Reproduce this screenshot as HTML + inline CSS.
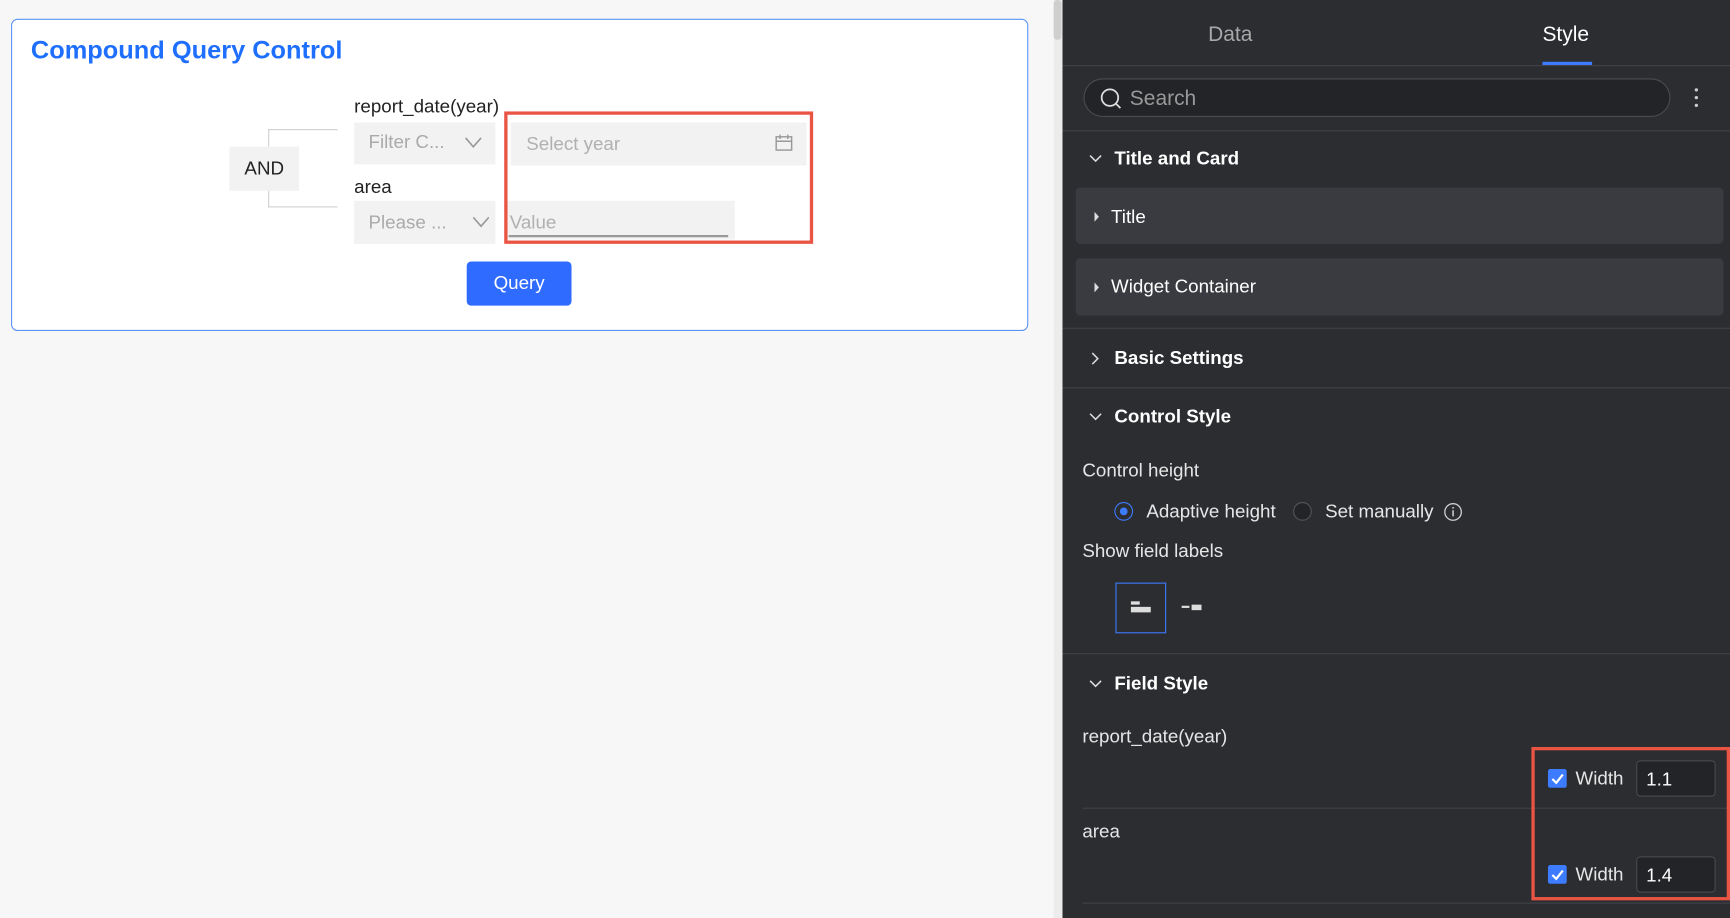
<!DOCTYPE html>
<html><head><meta charset="utf-8"><style>
*{box-sizing:border-box;margin:0;padding:0}
html,body{width:1730px;height:918px;overflow:hidden;background:#f7f7f7;font-family:"Liberation Sans",sans-serif}
#w{position:absolute;left:0;top:0;width:1568px;height:832px;transform:scale(1.10332,1.10337);transform-origin:0 0}
.a{position:absolute}
.t{position:absolute;white-space:nowrap}
.rp{color:#e6e6e6;font-size:17px}
.hd{color:#fff;font-weight:bold;font-size:17px}
.ln{position:absolute;height:1px;background:#414247}
</style></head><body><div id="w">
<div class="a" style="left:0;top:0;width:955px;height:832px;background:#f7f7f7"></div>
<div class="a" style="left:955px;top:0;width:8px;height:832px;background:#ececec"></div>
<div class="a" style="left:955px;top:0;width:7px;height:36px;background:#cfcfcf;border-radius:3px"></div>
<!-- card -->
<div class="a" style="left:10px;top:17px;width:922px;height:283px;background:#fff;border:1.5px solid #5b93f5;border-radius:6px"></div>
<div class="t" style="left:28px;top:32px;font-size:23px;font-weight:bold;color:#1f6fff">Compound Query Control</div>
<div class="a" style="left:243px;top:117px;width:63px;height:71px;border:1.5px solid #d0d0d0;border-right:none"></div>
<div class="a" style="left:208px;top:133px;width:63px;height:40px;background:#f2f2f2;font-size:17px;color:#222;text-align:center;line-height:40px">AND</div>
<div class="t" style="left:321px;top:87px;font-size:17px;color:#222">report_date(year)</div>
<div class="a" style="left:321px;top:111px;width:128px;height:38px;background:#f2f2f2"></div>
<div class="t" style="left:334px;top:119px;font-size:17px;color:#aaa">Filter C...</div>
<svg class="a" style="left:421px;top:123px" width="16" height="12"><path d="M1 2l7 8 7-8" fill="none" stroke="#999" stroke-width="1.5"/></svg>
<div class="a" style="left:463px;top:111px;width:268px;height:39px;background:#f2f2f2"></div>
<div class="t" style="left:477px;top:121px;font-size:17px;color:#b0b0b0">Select year</div>
<svg class="a" style="left:702px;top:121px" width="18" height="17"><rect x="1.5" y="3" width="14" height="12" fill="none" stroke="#999" stroke-width="1.3"/><path d="M1.5 7h14M5 1v4M12 1v4" stroke="#999" stroke-width="1.3"/></svg>
<div class="t" style="left:321px;top:160px;font-size:17px;color:#222">area</div>
<div class="a" style="left:321px;top:182px;width:128px;height:39px;background:#f2f2f2"></div>
<div class="t" style="left:334px;top:192px;font-size:17px;color:#aaa">Please ...</div>
<svg class="a" style="left:428px;top:195px" width="16" height="12"><path d="M1 2l7 8 7-8" fill="none" stroke="#999" stroke-width="1.5"/></svg>
<div class="a" style="left:459px;top:182px;width:207px;height:35px;background:#f2f2f2"></div>
<div class="a" style="left:461px;top:213px;width:199px;height:2px;background:#999"></div>
<div class="t" style="left:462px;top:192px;font-size:17px;color:#b0b0b0">Value</div>
<div class="a" style="left:457px;top:101px;width:280px;height:120px;border:3px solid #ea5443"></div>
<div class="a" style="left:423px;top:237px;width:95px;height:40px;background:#2f6bff;border-radius:4px;color:#fff;font-size:17px;text-align:center;line-height:40px">Query</div>
<!-- right panel -->
<div class="a" style="left:963px;top:0;width:605px;height:832px;background:#2c2d31"></div>
<div class="t" style="left:1095px;top:21px;font-size:19px;color:#a8a8a8">Data</div>
<div class="t" style="left:1398px;top:21px;font-size:19px;color:#fff">Style</div>
<div class="a" style="left:1398px;top:56px;width:45px;height:3px;background:#3d7bff"></div>
<div class="ln" style="left:963px;top:59px;width:605px"></div>
<div class="a" style="left:982px;top:71px;width:532px;height:35px;border:1px solid #4a4b50;border-radius:18px;background:#232428"></div>
<svg class="a" style="left:996px;top:79px" width="22" height="22"><circle cx="10" cy="9.5" r="7.5" fill="none" stroke="#ddd" stroke-width="1.6"/><path d="M15.5 15l4 4" stroke="#ddd" stroke-width="1.6"/></svg>
<div class="t" style="left:1024px;top:79px;font-size:19px;color:#999">Search</div>
<div class="a" style="left:1536px;top:80px;width:3px;height:3px;background:#ccc;border-radius:2px;box-shadow:0 7px #ccc,0 14px #ccc"></div>
<div class="ln" style="left:963px;top:118px;width:605px"></div>
<svg class="a" style="left:987px;top:139px" width="12" height="10"><path d="M1 2l5 5 5-5" fill="none" stroke="#ddd" stroke-width="1.4"/></svg>
<div class="t hd" style="left:1010px;top:134px">Title and Card</div>
<div class="a" style="left:975px;top:170px;width:587px;height:51px;background:#3a3b40;border-radius:4px"></div>
<svg class="a" style="left:991px;top:192px" width="6" height="9"><path d="M1 0l4 4.5L1 9z" fill="#ddd"/></svg>
<div class="t rp" style="left:1007px;top:187px;color:#fff">Title</div>
<div class="a" style="left:975px;top:234px;width:587px;height:52px;background:#3a3b40;border-radius:4px"></div>
<svg class="a" style="left:991px;top:256px" width="6" height="9"><path d="M1 0l4 4.5L1 9z" fill="#ddd"/></svg>
<div class="t rp" style="left:1007px;top:250px;color:#fff">Widget Container</div>
<div class="ln" style="left:963px;top:297px;width:605px"></div>
<svg class="a" style="left:988px;top:319px" width="10" height="12"><path d="M2 1l5 5-5 5" fill="none" stroke="#ddd" stroke-width="1.4"/></svg>
<div class="t hd" style="left:1010px;top:315px">Basic Settings</div>
<div class="ln" style="left:963px;top:351px;width:605px"></div>
<svg class="a" style="left:987px;top:373px" width="12" height="10"><path d="M1 2l5 5 5-5" fill="none" stroke="#ddd" stroke-width="1.4"/></svg>
<div class="t hd" style="left:1010px;top:368px">Control Style</div>
<div class="t rp" style="left:981px;top:417px">Control height</div>
<div class="a" style="left:1010px;top:455px;width:17px;height:17px;border:1.5px solid #3d7bff;border-radius:50%"></div>
<div class="a" style="left:1015px;top:460px;width:7px;height:7px;background:#3d7bff;border-radius:50%"></div>
<div class="t rp" style="left:1039px;top:454px">Adaptive height</div>
<div class="a" style="left:1172px;top:455px;width:17px;height:17px;border:1px solid #555;border-radius:50%;background:#232428"></div>
<div class="t rp" style="left:1201px;top:454px">Set manually</div>
<svg class="a" style="left:1308px;top:455px" width="18" height="18"><circle cx="9" cy="9" r="7.5" fill="none" stroke="#ccc" stroke-width="1.2"/><path d="M9 7.5v5.5M9 4.5v1.5" stroke="#ccc" stroke-width="1.4"/></svg>
<div class="t rp" style="left:981px;top:490px">Show field labels</div>
<div class="a" style="left:1011px;top:528px;width:46px;height:46px;border:1px solid #3d7bff"></div>
<div class="a" style="left:1025px;top:545px;width:8px;height:3px;background:#ddd"></div>
<div class="a" style="left:1025px;top:550px;width:18px;height:5px;background:#ddd"></div>
<div class="a" style="left:1071px;top:549px;width:7px;height:2px;background:#ddd"></div>
<div class="a" style="left:1080px;top:548px;width:9px;height:5px;background:#ddd"></div>
<div class="ln" style="left:963px;top:592px;width:605px"></div>
<svg class="a" style="left:987px;top:615px" width="12" height="10"><path d="M1 2l5 5 5-5" fill="none" stroke="#ddd" stroke-width="1.4"/></svg>
<div class="t hd" style="left:1010px;top:610px">Field Style</div>
<div class="t rp" style="left:981px;top:658px">report_date(year)</div>
<div class="a" style="left:1403px;top:697px;width:17px;height:17px;background:#3d7bff;border-radius:2px"></div>
<svg class="a" style="left:1403px;top:697px" width="17" height="17"><path d="M4 9l3.5 3.5L13.5 5" fill="none" stroke="#fff" stroke-width="2"/></svg>
<div class="t rp" style="left:1428px;top:696px">Width</div>
<div class="a" style="left:1483px;top:689px;width:72px;height:33px;border:1px solid #48494e;border-radius:4px;background:#232428"></div>
<div class="t rp" style="left:1492px;top:697px;color:#fff">1.1</div>
<div class="ln" style="left:981px;top:732px;width:587px"></div>
<div class="t rp" style="left:981px;top:744px">area</div>
<div class="a" style="left:1403px;top:784px;width:17px;height:17px;background:#3d7bff;border-radius:2px"></div>
<svg class="a" style="left:1403px;top:784px" width="17" height="17"><path d="M4 9l3.5 3.5L13.5 5" fill="none" stroke="#fff" stroke-width="2"/></svg>
<div class="t rp" style="left:1428px;top:783px">Width</div>
<div class="a" style="left:1483px;top:776px;width:72px;height:33px;border:1px solid #48494e;border-radius:4px;background:#232428"></div>
<div class="t rp" style="left:1492px;top:784px;color:#fff">1.4</div>
<div class="ln" style="left:981px;top:818px;width:587px"></div>
<div class="a" style="left:1388px;top:677px;width:180px;height:139px;border:3px solid #ea5443"></div>
</div></body></html>
